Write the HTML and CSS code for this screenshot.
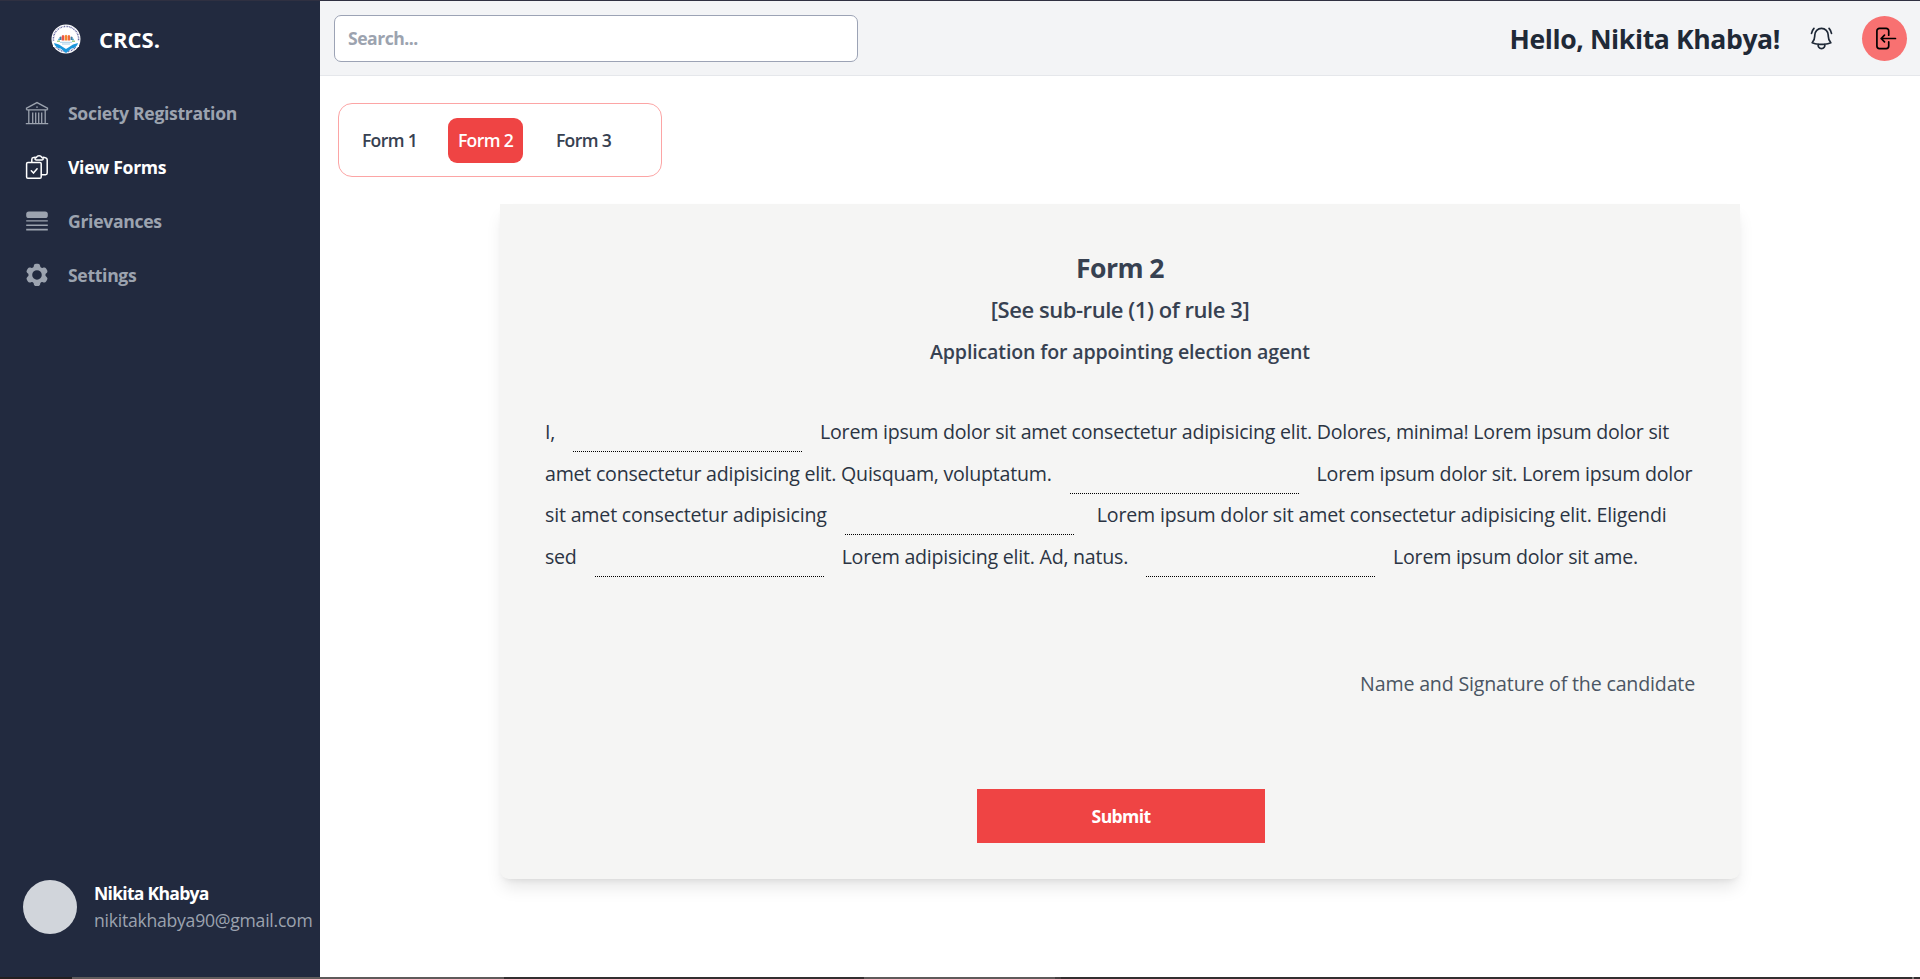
FILE: index.html
```html
<!DOCTYPE html>
<html lang="en">
<head>
<meta charset="utf-8">
<title>CRCS</title>
<link rel="stylesheet" href="styles.css">
</head>
<body>
<div class="edge-top"></div>
<div class="app">
  <aside class="sidebar">
    <div class="brand">
      <svg class="logo" viewBox="0 0 30 30">
        <circle cx="15" cy="15" r="14.5" fill="#fff"/>
        <circle cx="15" cy="15" r="12.6" fill="none" stroke="#3b3f86" stroke-width="1.5" stroke-dasharray="1.3 .8 .7 .6" pathLength="80" opacity=".75"/>
        <path d="M2 17h26v6H2z" fill="#fff"/>
        <g fill="#52b7d8"><circle cx="8" cy="15.6" r="1"/><circle cx="22" cy="15.6" r="1"/></g>
        <path d="M8.5 16v-2.5q1-2 2 0V16z" fill="#3d7fa6"/>
        <path d="M10.7 16.4v-4.3q1.3-2.4 2.6 0v4.3z" fill="#ea5546"/>
        <path d="M13.8 16.4v-4.7q1.3-2 2.4 0v4.7z" fill="#f28a2e"/>
        <path d="M16.6 16.4v-4.3q1.3-2.4 2.6 0v4.3z" fill="#f36b3a"/>
        <path d="M19.6 16v-2.5q1-2 2 0V16z" fill="#3d7fa6"/>
        <path d="M6 17.2h3M21 17.2h3" stroke="#79b94b" stroke-width="1"/>
        <path d="M9 18.3h12M11 20h8" stroke="#9cc7e4" stroke-width=".9"/>
        <path d="M3 19l5 1.5 3.8 2.4L15 25l3.2-2.1 3.8-2.4 5-1.5c-.8 3.2-3 5-6.5 5.6L15 29l-5.5-4.4C6 24 3.8 22.2 3 19z" fill="#1a97dc"/>
      </svg>
      <span class="brand-name">CRCS.</span>
    </div>
    <nav class="menu">
      <a class="item">
        <svg class="icon" viewBox="0 0 24 24" fill="none" stroke="currentColor" stroke-width="1.3">
          <path d="M1.5 8.7V7.2L12 1.6l10.500 5.600v1.500M1.500 8.900h21M3.800 8.900v13.200M7.700 11.500v10.600M10.700 11.500v10.600M13.700 11.500v10.600M16.700 11.500v10.600M20.200 8.900v13.200M.8 22.700h22.400M11.200 6.200h1.600"/>
        </svg>
        <span>Society Registration</span>
      </a>
      <a class="item active">
        <svg class="icon" viewBox="0 0 24 24" fill="none" stroke="currentColor" stroke-width="1.5" stroke-linejoin="round" stroke-linecap="round">
          <rect x="1.6" y="7.4" width="14.6" height="15.8" rx="1.3"/>
          <path d="M6.300 15.800l2.200 2.300 3.600-4.300"/>
          <path d="M6.800 7V4.500Q6.800 2.800 8.500 2.600L10.300 2.200M18 2.200l2.500.5q1.700.3 1.700 2v13.200q0 1.700-1.700 1.800h-3.900"/>
          <path d="M10 4.100q-.3-1.300 1.400-1.700Q12.200.8 14.100.8t2.700 1.600q1.700.4 1.400 1.700-.2.800-1.200.8h-5.800q-1 0-1.200-.8z"/>
        </svg>
        <span>View Forms</span>
      </a>
      <a class="item">
        <svg class="icon" viewBox="0 0 24 24" fill="currentColor">
          <rect x="1.2" y="2.4" width="21.600" height="6.600" rx="2.600"/>
          <path d="M1.200 11.200h21.600v1.400H1.200zM1.200 15.500h21.600v1.400H1.200zM1.200 19.800h21.600v1.600H1.200z"/>
        </svg>
        <span>Grievances</span>
      </a>
      <a class="item">
        <svg class="icon" viewBox="0 0 24 24" fill="currentColor" fill-rule="evenodd">
          <path d="M11.078 2.250c-.917 0-1.699.663-1.850 1.567L9.050 4.889c-.020.120-.115.260-.297.348a7.493 7.493 0 0 0-.986.570c-.166.115-.334.126-.450.083L6.300 5.508a1.875 1.875 0 0 0-2.282.819l-.922 1.597a1.875 1.875 0 0 0 .432 2.385l.840.692c.095.078.170.229.154.430a7.598 7.598 0 0 0 0 1.139c.015.200-.059.352-.153.430l-.841.692a1.875 1.875 0 0 0-.432 2.385l.922 1.597a1.875 1.875 0 0 0 2.282.818l1.019-.382c.115-.043.283-.031.450.082.312.214.641.405.985.570.182.088.277.228.297.350l.178 1.071c.151.904.933 1.567 1.850 1.567h1.844c.916 0 1.699-.663 1.850-1.567l.178-1.072c.020-.120.114-.260.297-.349.344-.165.673-.356.985-.570.167-.114.335-.125.450-.082l1.020.382a1.875 1.875 0 0 0 2.280-.819l.923-1.597a1.875 1.875 0 0 0-.432-2.385l-.840-.692c-.095-.078-.170-.229-.154-.430a7.614 7.614 0 0 0 0-1.139c-.016-.200.059-.352.153-.430l.840-.692c.708-.582.891-1.590.433-2.385l-.922-1.597a1.875 1.875 0 0 0-2.282-.818l-1.020.382c-.114.043-.282.031-.449-.083a7.490 7.490 0 0 0-.985-.570c-.183-.087-.277-.227-.297-.348l-.179-1.072a1.875 1.875 0 0 0-1.850-1.567h-1.843ZM12 16.200a4.200 4.200 0 1 0 0-8.400 4.200 4.200 0 0 0 0 8.400Z" transform="translate(-1.7 -1.7) scale(1.14)"/>
        </svg>
        <span>Settings</span>
      </a>
    </nav>
    <div class="user">
      <div class="avatar"></div>
      <div class="user-text">
        <span class="user-name">Nikita Khabya</span>
        <span class="user-mail">nikitakhabya90@gmail.com</span>
      </div>
    </div>
  </aside>
  <div class="main">
    <header class="header">
      <input class="search" type="text" placeholder="Search...">
      <div class="greeting">Hello, Nikita Khabya!</div>
      <svg class="bell" viewBox="0 0 24 24" fill="none" stroke="currentColor" stroke-width="1.5" stroke-linecap="round" stroke-linejoin="round">
        <path d="M14.857 17.082a23.848 23.848 0 0 0 5.454-1.310A8.967 8.967 0 0 1 18 9.750V9A6 6 0 0 0 6 9v.750a8.967 8.967 0 0 1-2.312 6.022c1.733.640 3.560 1.085 5.455 1.310m5.714 0a24.255 24.255 0 0 1-5.714 0m5.714 0a3 3 0 1 1-5.714 0M3.124 7.500A8.969 8.969 0 0 1 5.292 3m13.416 0a8.969 8.969 0 0 1 2.168 4.500"/>
      </svg>
      <button class="logout">
        <svg class="logout-icon" viewBox="0 0 24 24" fill="none" stroke="currentColor" stroke-width="1.5" stroke-linecap="round" stroke-linejoin="round">
          <path d="M15.750 9V5.250A2.250 2.250 0 0 0 13.500 3h-6a2.250 2.250 0 0 0-2.250 2.250v13.500A2.250 2.250 0 0 0 7.500 21h6a2.250 2.250 0 0 0 2.250-2.250V15M12 9l-3 3m0 0 3 3m-3-3h12.750"/>
        </svg>
      </button>
    </header>
    <div class="tabs">
      <a class="tab">Form 1</a>
      <a class="tab selected">Form 2</a>
      <a class="tab">Form 3</a>
    </div>
    <section class="card">
      <h1 class="title">Form 2</h1>
      <h2 class="rule">[See sub-rule (1) of rule 3]</h2>
      <h3 class="subject">Application for appointing election agent</h3>
      <div class="statement">
        <div class="line"><span>I,</span><i class="blank"></i><span>Lorem ipsum dolor sit amet consectetur adipisicing elit. Dolores, minima! Lorem ipsum dolor sit</span></div>
        <div class="line"><span>amet consectetur adipisicing elit. Quisquam, voluptatum.</span><i class="blank"></i><span>Lorem ipsum dolor sit. Lorem ipsum dolor</span></div>
        <div class="line loose"><span>sit amet consectetur adipisicing</span><i class="blank wide"></i><span>Lorem ipsum dolor sit amet consectetur adipisicing elit. Eligendi</span></div>
        <div class="line"><span>sed</span><i class="blank"></i><span>Lorem adipisicing elit. Ad, natus.</span><i class="blank"></i><span>Lorem ipsum dolor sit ame.</span></div>
      </div>
      <p class="signature">Name and Signature of the candidate</p>
      <button class="submit">Submit</button>
    </section>
  </div>
</div>
<div class="edge-bottom"></div>
</body>
</html>
```
FILE: styles.css
```css
* { box-sizing: border-box; }

body {
  margin: 0;
  height: 979px;
  display: flex;
  flex-direction: column;
  overflow: hidden;
  background: #fff;
  font-family: "Open Sans", "Noto Sans", sans-serif;
  font-size: 17.6px;
  color: #1f2937;
}

.edge-top { height: 1px; background: #2f3041; }
.edge-bottom {
  height: 2px;
  background: linear-gradient(90deg, #231f20 72px, #5f5b5b 72px 504px, #332f30 504px 864px, #5f5b5b 864px 1055px, #454142 1055px 1061px, #332f30 1061px 1912px, #777 1912px 1914px, #332f30 1914px);
}
.app { flex: 1; display: flex; min-height: 0; }

.sidebar {
  width: 320px;
  display: flex;
  flex-direction: column;
  background: #222a3f;
  color: #9ca3af;
}
.brand { display: flex; align-items: center; height: 75px; padding-left: 51px; }
.logo { width: 30px; height: 30px; }
.brand-name { margin-left: 18px; font-size: 22px; font-weight: 700; color: #fff; }
.menu { display: flex; flex-direction: column; padding-top: 10px; }
.item {
  display: flex;
  align-items: center;
  gap: 19px;
  height: 54px;
  padding-left: 25px;
  font-weight: 700;
  letter-spacing: -0.32px;
}
.item.active { color: #fff; }
.icon { width: 24px; height: 24px; }
.user { display: flex; margin-top: auto; padding: 0 0 43px 23px; }
.avatar { width: 54px; height: 54px; border-radius: 50%; background: #d1d5db; }
.user-text { display: flex; flex-direction: column; margin-left: 17px; line-height: 27px; }
.user-name { font-weight: 700; color: #fff; letter-spacing: -0.75px; }
.user-mail { letter-spacing: -0.25px; }

.main { flex: 1; display: flex; flex-direction: column; }
.header {
  display: flex;
  align-items: center;
  height: 75px;
  padding: 0 13px 0 14px;
  background: #f3f4f6;
  border-bottom: 1px solid #e5e7eb;
}
.search {
  width: 524px;
  height: 47px;
  padding: 0 13px;
  border: 1px solid #9ca3b5;
  border-radius: 7px;
  background: #fff;
  font: 700 17.6px "Open Sans", sans-serif;
  letter-spacing: -0.5px;
}
.search::placeholder { color: #9ca3af; opacity: 1; }
.greeting { margin: 2px 0 0 auto; font-size: 26.6px; font-weight: 700; letter-spacing: -0.4px; }
.bell { width: 27px; height: 27px; margin-left: 28px; }
.logout {
  display: flex;
  align-items: center;
  justify-content: center;
  width: 45px;
  height: 45px;
  margin-left: 27px;
  padding: 0;
  border: 0;
  border-radius: 50%;
  background: #f87171;
  color: #000;
}
.logout-icon { width: 27px; height: 27px; }

.tabs {
  display: flex;
  align-items: center;
  width: 324px;
  height: 74px;
  margin: 27px 0 0 18px;
  padding-left: 13px;
  border: 1px solid #fca5a5;
  border-radius: 14px;
}
.tab {
  width: 75px;
  height: 45px;
  border-radius: 9px;
  line-height: 45px;
  text-align: center;
  font-weight: 600;
  letter-spacing: -0.65px;
  white-space: nowrap;
  color: #374151;
}
.tab.selected { margin: 0 23px 0 21px; background: #ef4444; color: #fff; }

.card {
  display: flex;
  flex-direction: column;
  width: 1240px;
  height: 675px;
  margin: 27px auto 0;
  padding: 43.6px 45px 0;
  border-radius: 0 0 9px 9px;
  background: #f5f5f4;
  box-shadow: 0 11px 17px -3px rgb(0 0 0 / .1), 0 4px 7px -4px rgb(0 0 0 / .1);
}
.title, .rule, .subject { margin: 0; text-align: center; line-height: 41.7px; color: #374151; }
.title { font-size: 26.6px; font-weight: 700; letter-spacing: -0.6px; }
.rule { font-size: 22px; font-weight: 600; letter-spacing: -0.45px; }
.subject { font-size: 19.6px; font-weight: 600; letter-spacing: -0.15px; }
.statement { margin-top: 38.5px; font-size: 19.6px; letter-spacing: -0.235px; color: #2b3443; }
.line { display: flex; height: 41.5px; line-height: 41.5px; white-space: nowrap; }
.line.loose { letter-spacing: -0.18px; }
.blank { width: 229px; height: 41px; margin: 0 18px; border-bottom: 1px dotted #000; }
.blank.wide { margin-right: 23px; }
.signature {
  margin: 85.4px 0 0;
  line-height: 42px;
  text-align: right;
  font-size: 19.6px;
  letter-spacing: -0.17px;
  color: #4b5563;
}
.submit {
  width: 288px;
  height: 54px;
  margin: 84px 0 0 432px;
  border: 0;
  background: #ef4444;
  color: #fff;
  font: 700 17.6px "Open Sans", sans-serif;
  letter-spacing: -0.65px;
}
```
